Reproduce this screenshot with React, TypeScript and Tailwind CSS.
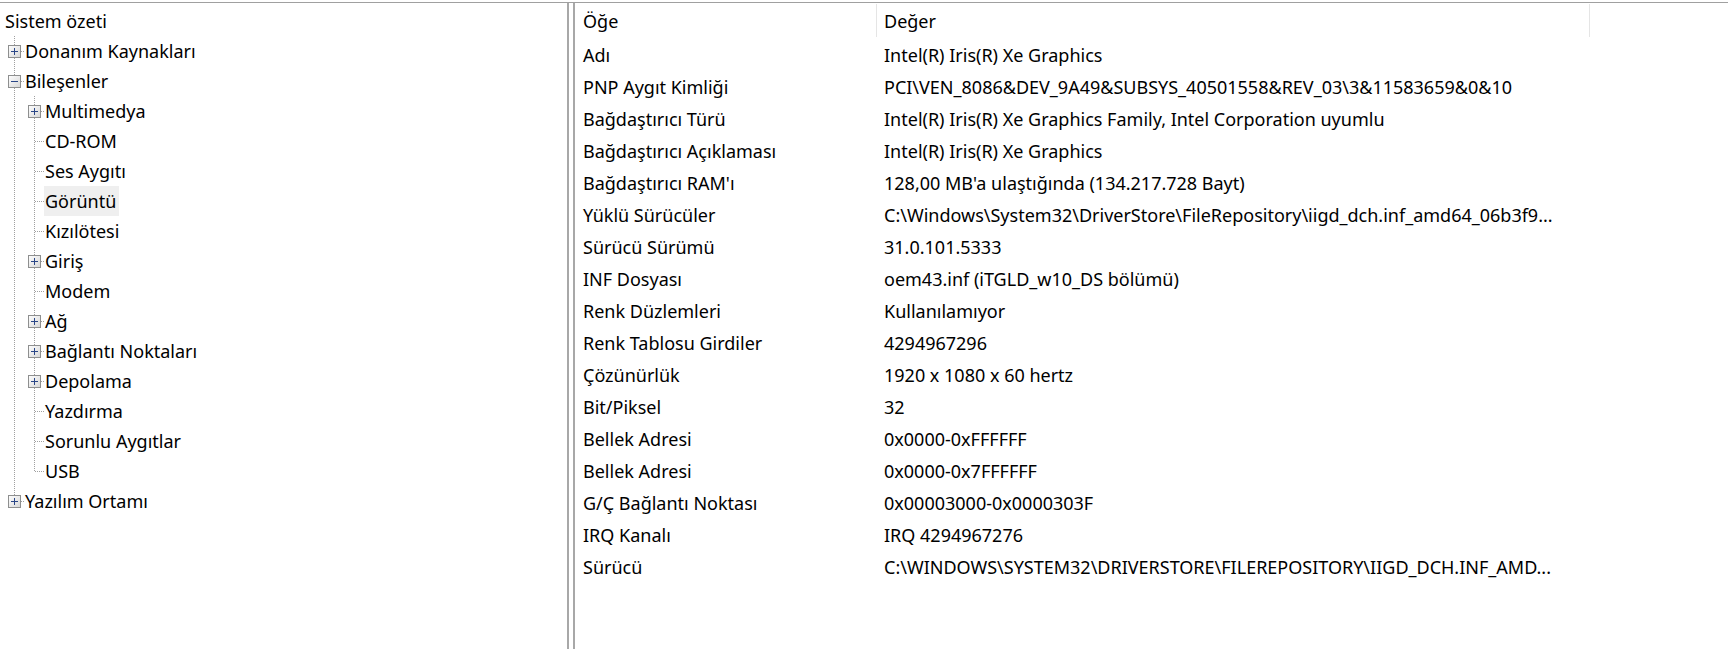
import React from "react";

type GuideKind = "line" | "tee" | "corner" | "plus" | "minus" | "plusLast";

interface TreeItem {
  label: string;
  guides: GuideKind[];
  selected?: boolean;
}

const treeItems: TreeItem[] = [
  { label: "Sistem özeti", guides: [] },
  { label: "Donanım Kaynakları", guides: ["plus"] },
  { label: "Bileşenler", guides: ["minus"] },
  { label: "Multimedya", guides: ["line", "plus"] },
  { label: "CD-ROM", guides: ["line", "tee"] },
  { label: "Ses Aygıtı", guides: ["line", "tee"] },
  { label: "Görüntü", guides: ["line", "tee"], selected: true },
  { label: "Kızılötesi", guides: ["line", "tee"] },
  { label: "Giriş", guides: ["line", "plus"] },
  { label: "Modem", guides: ["line", "tee"] },
  { label: "Ağ", guides: ["line", "plus"] },
  { label: "Bağlantı Noktaları", guides: ["line", "plus"] },
  { label: "Depolama", guides: ["line", "plus"] },
  { label: "Yazdırma", guides: ["line", "tee"] },
  { label: "Sorunlu Aygıtlar", guides: ["line", "tee"] },
  { label: "USB", guides: ["line", "corner"] },
  { label: "Yazılım Ortamı", guides: ["plusLast"] },
];

const rows: [string, string][] = [
  ["Adı", "Intel(R) Iris(R) Xe Graphics"],
  ["PNP Aygıt Kimliği", "PCI\\VEN_8086&DEV_9A49&SUBSYS_40501558&REV_03\\3&11583659&0&10"],
  ["Bağdaştırıcı Türü", "Intel(R) Iris(R) Xe Graphics Family, Intel Corporation uyumlu"],
  ["Bağdaştırıcı Açıklaması", "Intel(R) Iris(R) Xe Graphics"],
  ["Bağdaştırıcı RAM'ı", "128,00 MB'a ulaştığında (134.217.728 Bayt)"],
  ["Yüklü Sürücüler", "C:\\Windows\\System32\\DriverStore\\FileRepository\\iigd_dch.inf_amd64_06b3f9..."],
  ["Sürücü Sürümü", "31.0.101.5333"],
  ["INF Dosyası", "oem43.inf (iTGLD_w10_DS bölümü)"],
  ["Renk Düzlemleri", "Kullanılamıyor"],
  ["Renk Tablosu Girdiler", "4294967296"],
  ["Çözünürlük", "1920 x 1080 x 60 hertz"],
  ["Bit/Piksel", "32"],
  ["Bellek Adresi", "0x0000-0xFFFFFF"],
  ["Bellek Adresi", "0x0000-0x7FFFFFF"],
  ["G/Ç Bağlantı Noktası", "0x00003000-0x0000303F"],
  ["IRQ Kanalı", "IRQ 4294967276"],
  ["Sürücü", "C:\\WINDOWS\\SYSTEM32\\DRIVERSTORE\\FILEREPOSITORY\\IIGD_DCH.INF_AMD..."],
];

const DOT = "#a0a0a0";

function Guide({ kind }: { kind: GuideKind }) {
  const isBox = kind === "plus" || kind === "minus" || kind === "plusLast";
  const bottomHalf = kind === "line" || kind === "tee" || kind === "plus" || kind === "minus";
  const horiz = kind !== "line";
  return (
    <svg width="20" height="30" className="shrink-0">
      <defs>
        <linearGradient id="boxfill" x1="0" y1="0" x2="1" y2="1">
          <stop offset="0" stopColor="#ffffff" />
          <stop offset="1" stopColor="#d6d6d6" />
        </linearGradient>
      </defs>
      <line x1="10.5" y1="0" x2="10.5" y2="15" stroke={DOT} strokeDasharray="1 1" />
      {bottomHalf && (
        <line x1="10.5" y1="16" x2="10.5" y2="30" stroke={DOT} strokeDasharray="1 1" />
      )}
      {horiz && (
        <line x1="11" y1="15.5" x2="20" y2="15.5" stroke={DOT} strokeDasharray="1 1" />
      )}
      {isBox && (
        <>
          <rect x="4.5" y="9.5" width="12" height="12" fill="url(#boxfill)" stroke="#8e8f8f" />
          <line x1="7" y1="15.5" x2="14" y2="15.5" stroke="#2a4687" />
          {kind !== "minus" && (
            <line x1="10.5" y1="12" x2="10.5" y2="19" stroke="#2a4687" />
          )}
        </>
      )}
    </svg>
  );
}

function TreeRow({ item }: { item: TreeItem }) {
  return (
    <div className="flex h-[30px] items-center">
      {item.guides.map((g, i) => (
        <Guide key={i} kind={g} />
      ))}
      <span
        className={
          "flex h-[30px] items-center whitespace-nowrap pl-[1px] pr-[3px] " +
          (item.selected ? "bg-[#efefef]" : "")
        }
      >
        {item.label}
      </span>
    </div>
  );
}

export default function App() {
  return (
    <div className="h-[649px] w-[1728px] overflow-hidden bg-white pt-[2px] font-['Noto_Sans',sans-serif] text-[18px] text-black">
      <div className="flex h-full border-t border-[#a0a0a0]">
        {/* Tree */}
        <div className="h-full w-[569px] shrink-0 border-r-2 border-[#a8a8a8] pl-[4px] pt-[3px]">
          {treeItems.map((item, i) => (
            <TreeRow key={i} item={item} />
          ))}
        </div>

        <div className="w-[4px] shrink-0" />

        {/* Details list */}
        <div className="h-full flex-1 border-l-2 border-[#a8a8a8]">
          <div className="flex h-[36px]">
            <div className="flex w-[301px] items-center pl-[8px]">Öğe</div>
            <div className="mt-[1px] h-[33px] w-px bg-[#e5e5e5]" />
            <div className="flex w-[712px] items-center pl-[7px]">Değer</div>
            <div className="mt-[1px] h-[33px] w-px bg-[#e5e5e5]" />
          </div>
          {rows.map(([k, v], i) => (
            <div key={i} className="flex h-[32px] items-center">
              <div className="w-[301px] truncate pl-[8px]">{k}</div>
              <div className="w-[713px] truncate pl-[8px]">{v}</div>
            </div>
          ))}
        </div>
      </div>
    </div>
  );
}
